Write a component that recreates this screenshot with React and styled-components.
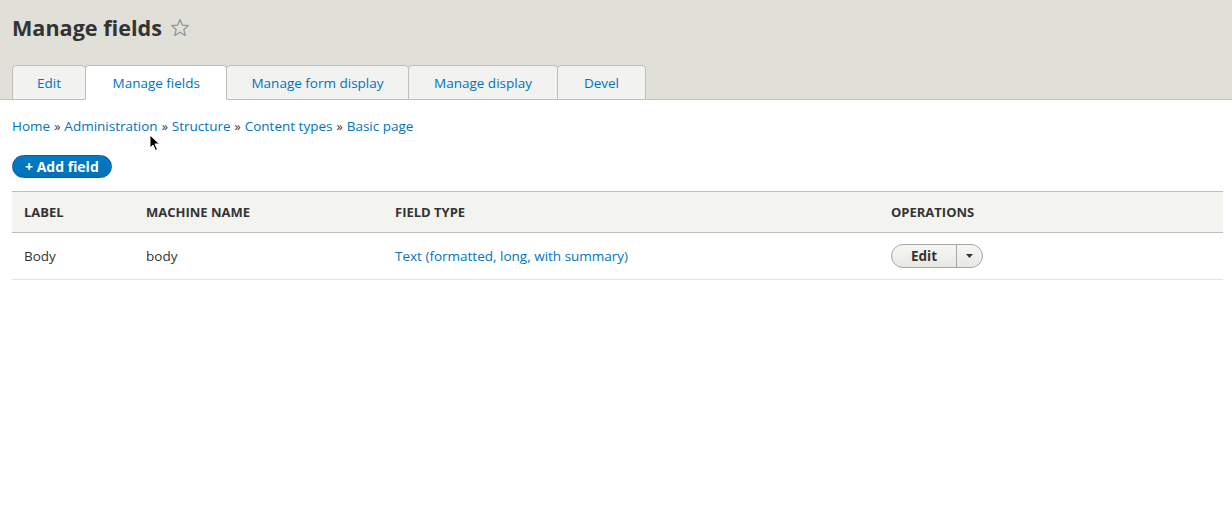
import React from 'react';
import styled, { createGlobalStyle } from 'styled-components';

const GlobalStyle = createGlobalStyle`
  html, body {
    margin: 0;
    padding: 0;
    background: #fff;
  }
  body {
    font-family: "Open Sans", "DejaVu Sans", sans-serif;
    font-size: 13.5px;
    color: #333;
  }
  * { box-sizing: border-box; }
`;

const Page = styled.div`
  position: relative;
  min-height: 526px;
`;

const Header = styled.header`
  background: #e0e0d8;
  border-bottom: 1px solid #bfbfba;
  padding: 13px 12px 0;
`;

const TitleRow = styled.div`
  display: flex;
  align-items: center;
  gap: 8px;
  height: 30px;
`;

const Title = styled.h1`
  margin: 0;
  font-size: 21.6px;
  line-height: 30px;
  font-weight: 700;
  color: #333;
`;

const Tabs = styled.ul`
  display: flex;
  list-style: none;
  margin: 22px 0 -1px;
  padding: 0;
`;

const Tab = styled.li`
  position: relative;
  z-index: ${p => (p.$active ? 2 : 1)};
  height: 35px;
  margin-right: -1px;
  padding: 0 ${p => p.$pad}px;
  display: flex;
  align-items: center;
  background: ${p => (p.$active ? '#fff' : '#f2f2f0')};
  border: 1px solid #bfbfba;
  border-bottom-color: ${p => (p.$active ? '#fff' : '#bfbfba')};
  border-radius: 4px 4px 0 0;
  color: #0074bd;
  font-size: 13.5px;
  white-space: nowrap;
`;

const Content = styled.main`
  padding: 16px 9px 0 12px;
`;

const Breadcrumb = styled.nav`
  line-height: 20px;
  font-size: 13.5px;
  color: #333;
`;

const Crumb = styled.a`
  color: #0074bd;
  text-decoration: none;
`;

const Sep = styled.span`
  margin: 0 4px;
  font-size: 12.5px;
`;

const AddButton = styled.button`
  margin-top: 18px;
  height: 23px;
  padding: 0 12px;
  border: 1px solid #1e5c90;
  border-radius: 12px;
  background: linear-gradient(#007bc6, #0071b8);
  color: #fff;
  font-family: inherit;
  font-size: 14px;
  font-weight: 700;
  line-height: 20px;
  cursor: pointer;
`;

const Table = styled.table`
  width: 100%;
  margin-top: 13px;
  border-collapse: collapse;
  table-layout: fixed;
`;

const Th = styled.th`
  width: ${p => (p.$w ? `${p.$w}px` : 'auto')};
  height: 41px;
  padding: 0 12px;
  text-align: left;
  background: #f3f3ef;
  border-top: 1px solid #bfbfba;
  border-bottom: 1px solid #bfbfba;
  font-size: 13px;
  font-weight: 700;
  text-transform: uppercase;
  color: #333;
`;

const Td = styled.td`
  height: 47px;
  padding: 0 12px;
  border-bottom: 1px solid #e6e4df;
  font-size: 13.5px;
  color: #333;
`;

const Link = styled.a`
  color: #0074bd;
  text-decoration: none;
`;

const DropButton = styled.div`
  display: inline-flex;
  align-items: stretch;
  height: 24px;
  border: 1px solid #a6a6a6;
  border-radius: 12px;
  background: linear-gradient(#f6f6f3, #e8e8e3);
  overflow: hidden;
`;

const DropMain = styled.span`
  display: flex;
  align-items: center;
  padding: 0 19px;
  font-size: 13.5px;
  font-weight: 700;
  color: #333;
`;

const DropToggle = styled.span`
  display: flex;
  align-items: center;
  justify-content: center;
  width: 26px;
  border-left: 1px solid #a6a6a6;
`;

const Cursor = styled.svg`
  position: absolute;
  left: 149px;
  top: 134px;
`;

const Star = () => (
  <svg width="20" height="20" viewBox="0 0 20 20">
    <path
      d="M10 1.6 L12.4 7.2 L18.4 7.6 L13.8 11.5 L15.3 17.4 L10 14.2 L4.7 17.4 L6.2 11.5 L1.6 7.6 L7.6 7.2 Z"
      fill="none"
      stroke="#8e929c"
      strokeWidth="1.2"
      strokeLinejoin="round"
    />
  </svg>
);

const tabs = [
  { label: 'Edit', pad: 24 },
  { label: 'Manage fields', pad: 26.5, active: true },
  { label: 'Manage form display', pad: 24 },
  { label: 'Manage display', pad: 25.5 },
  { label: 'Devel', pad: 25.5 },
];

const crumbs = ['Home', 'Administration', 'Structure', 'Content types', 'Basic page'];

export default function App() {
  return (
    <Page>
      <GlobalStyle />
      <Header>
        <TitleRow>
          <Title>Manage fields</Title>
          <Star />
        </TitleRow>
        <Tabs>
          {tabs.map(t => (
            <Tab key={t.label} $pad={t.pad} $active={t.active}>
              {t.label}
            </Tab>
          ))}
        </Tabs>
      </Header>
      <Content>
        <Breadcrumb>
          {crumbs.map((c, i) => (
            <React.Fragment key={c}>
              {i > 0 && <Sep>»</Sep>}
              <Crumb href="#">{c}</Crumb>
            </React.Fragment>
          ))}
        </Breadcrumb>
        <AddButton>+ Add field</AddButton>
        <Table>
          <thead>
            <tr>
              <Th $w={122}>Label</Th>
              <Th $w={249}>Machine name</Th>
              <Th $w={496}>Field type</Th>
              <Th>Operations</Th>
            </tr>
          </thead>
          <tbody>
            <tr>
              <Td>Body</Td>
              <Td>body</Td>
              <Td>
                <Link href="#">Text (formatted, long, with summary)</Link>
              </Td>
              <Td>
                <DropButton>
                  <DropMain>Edit</DropMain>
                  <DropToggle>
                    <svg width="7" height="4" viewBox="0 0 7 4">
                      <path d="M0 0 H7 L3.5 4 Z" fill="#333" />
                    </svg>
                  </DropToggle>
                </DropButton>
              </Td>
            </tr>
          </tbody>
        </Table>
      </Content>
      <Cursor width="12" height="18" viewBox="0 0 12 18">
        <path d="M1 1 L1 14 L4 11 L6.5 16.5 L8.5 15.5 L6 10 L10.5 10 Z" fill="#000" stroke="#fff" strokeWidth="1" />
      </Cursor>
    </Page>
  );
}
